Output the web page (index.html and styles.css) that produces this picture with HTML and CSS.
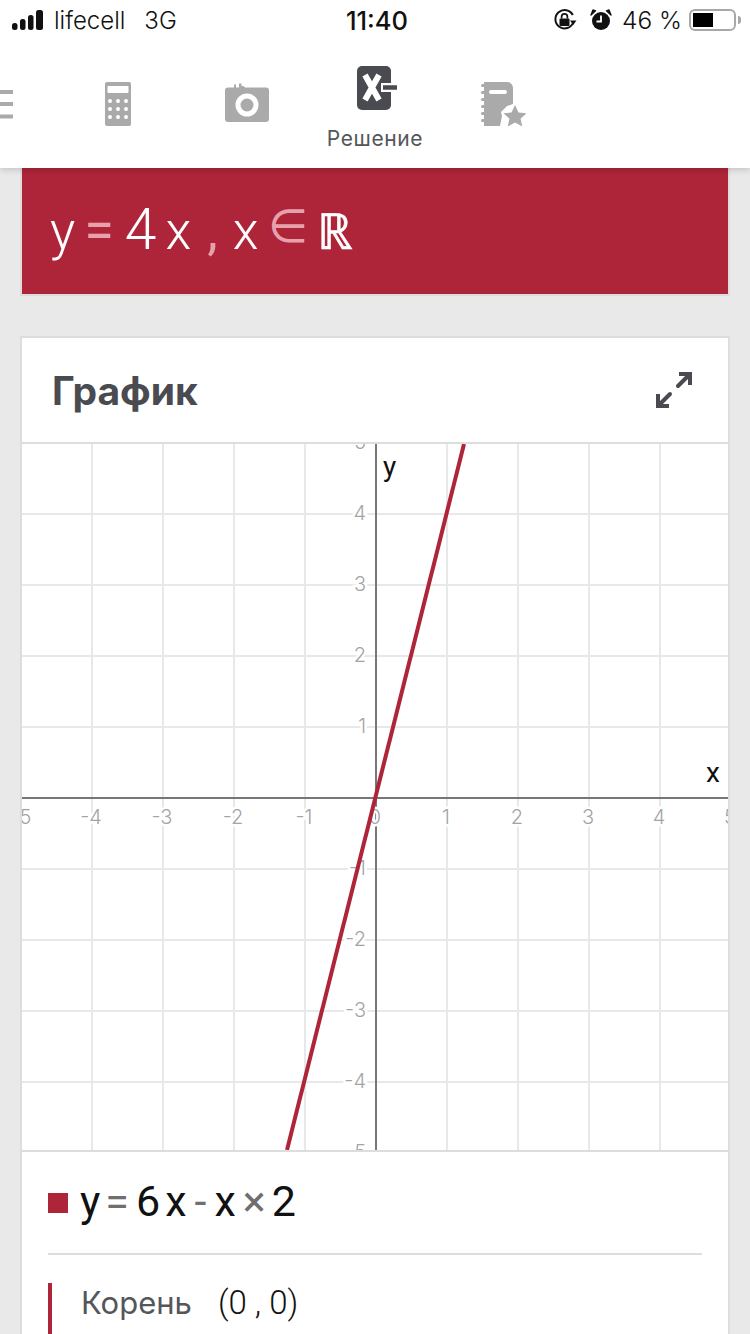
FILE: index.html
```html
<!DOCTYPE html>
<html lang="ru">
<head>
<meta charset="utf-8">
<title>График</title>
<link rel="stylesheet" href="styles.css">
</head>
<body>
<header class="top">
  <div class="status">
    <div class="status-left">
      <svg class="signal" width="33" height="20" viewBox="0 0 33 20"><rect x="0" y="13" width="5.5" height="7" rx="2.5"/><rect x="8" y="9" width="5.5" height="11" rx="2.5"/><rect x="16" y="5" width="5.5" height="15" rx="2.5"/><rect x="24" y="0" width="7" height="20" rx="2.5"/></svg>
      <span class="carrier">lifecell</span>
      <span class="net">3G</span>
    </div>
    <div class="clock">11:40</div>
    <div class="status-right">
      <svg class="lock" width="24" height="24" viewBox="0 0 24 24"><path d="M20.2 14.5A9.2 9.2 0 1 1 19.8 7" fill="none" stroke="#111" stroke-width="2"/><path d="M17 12.5H23.500L20.200 17Z" fill="#111"/><rect x="6.5" y="10.5" width="10" height="7.5" rx="1" fill="#111"/><path d="M8.6 10.5V8.8a2.9 2.9 0 0 1 5.8 0v1.7" fill="none" stroke="#111" stroke-width="1.7"/></svg>
      <svg class="alarm" width="22" height="22" viewBox="0 0 22 22"><circle cx="11" cy="12" r="9" fill="#111"/><path d="M11 6.5V12.5H6.5" fill="none" stroke="#fff" stroke-width="1.8"/><path d="M1 6 5.5 1.8 3 1ZM21 6 16.5 1.8 19 1Z" fill="#111" stroke="#111" stroke-width="1.4" stroke-linejoin="round"/></svg>
      <span class="percent">46 %</span>
      <div class="battery"><div class="battery-fill"></div></div>
      <div class="battery-nub"></div>
    </div>
  </div>
  <nav class="tabs">
    <div class="tab">
      <svg width="44" height="44" viewBox="0 0 44 44"><path d="M31 8h13v4H31zM31 20h13v4H31zM31 32.500h13v4H31z" fill="#aaa"/></svg>
    </div>
    <div class="tab">
      <svg width="44" height="44" viewBox="0 0 44 44"><path fill="#aaa" fill-rule="evenodd" d="M10 0H32a2 2 0 0 1 2 2V42a2 2 0 0 1-2 2H10a2 2 0 0 1-2-2V2a2 2 0 0 1 2-2ZM11.500 4a1 1 0 0 0-1 1V10a1 1 0 0 0 1 1H30.500a1 1 0 0 0 1-1V5a1 1 0 0 0-1-1Z"/><g fill="#fff"><circle cx="13" cy="19" r="2"/><circle cx="21" cy="19" r="2"/><circle cx="29" cy="19" r="2"/><circle cx="13" cy="27" r="2"/><circle cx="21" cy="27" r="2"/><circle cx="29" cy="27" r="2"/><circle cx="13" cy="35" r="2"/><circle cx="21" cy="35" r="2"/><circle cx="29" cy="35" r="2"/></g></svg>
    </div>
    <div class="tab">
      <svg width="44" height="44" viewBox="0 0 44 44"><path fill="#aaa" fill-rule="evenodd" d="M3 5.500H9V2.500h2V5.500h3V1.500h2.500V4h2L20 5.500H41a3 3 0 0 1 3 3V37a3 3 0 0 1-3 3H3a3 3 0 0 1-3-3V8.500a3 3 0 0 1 3-3Z"/><circle cx="22" cy="23" r="9" fill="#aaa" stroke="#fff" stroke-width="5"/></svg>
    </div>
    <div class="tab active">
      <svg width="44" height="44" viewBox="0 0 44 44"><rect x="4" y="0" width="34" height="44" rx="5" fill="#4a4b50"/><path d="M12 9 26 34M26 9 12 34" stroke="#fff" stroke-width="6"/><path d="M28 21.500H38" stroke="#fff" stroke-width="9"/><path d="M30 21.500H44" stroke="#4a4b50" stroke-width="4.500"/></svg>
      <span class="tab-label">Решение</span>
    </div>
    <div class="tab">
      <svg width="46" height="44" viewBox="-1 0 46 44"><path fill="#aaa" fill-rule="evenodd" d="M3 0H26a6 6 0 0 1 6 6V22l-6 2-6 6 1 4-2 10H3V40H1.500a1.500 1.500 0 0 1 0-3H3V33H1.500a1.500 1.500 0 0 1 0-3H3V26H1.500a1.500 1.500 0 0 1 0-3H3V19H1.500a1.500 1.500 0 0 1 0-3H3V12H1.500a1.500 1.500 0 0 1 0-3H3V5H1.500a1.500 1.500 0 0 1 0-3H3ZM10 8a1.500 1.500 0 0 0 0 4H24a1.500 1.500 0 0 0 0-4Z"/><path fill="#aaa" d="M34 23l3.500 7.500 8 .8-6 5.400 1.800 7.800-7.300-4-7.300 4 1.800-7.800-6-5.400 8-.8Z"/></svg>
    </div>
  </nav>
</header>

<section class="banner">
  <div class="math banner-math">
    <span>y</span><span class="op-light eq">=</span><span class="num">4</span><span class="x">x</span><span class="op-light comma">,</span><span class="x2">x</span><span class="op-light in">∈</span><span class="real">ℝ</span>
  </div>
</section>

<section class="card">
  <div class="card-head">
    <h2 class="card-title">График</h2>
    <svg class="expand" width="40" height="40" viewBox="0 0 40 40"><g fill="none" stroke="#4a4b50" stroke-width="4"><path d="M24 16 35 5" stroke-linecap="round"/><path d="M25 4H36V15"/><path d="M16 24 5 35" stroke-linecap="round"/><path d="M4 24V36H15"/></g></svg>
  </div>
  <div class="graph">
    <svg class="plot" width="706" height="706" viewBox="22 444 706 706">
      <g class="grid">
        <path d="M92 444V1150M163 444V1150M234 444V1150M305 444V1150M447 444V1150M518 444V1150M589 444V1150M660 444V1150"/>
        <path d="M22 514H728M22 585H728M22 656H728M22 727H728M22 869H728M22 940H728M22 1011H728M22 1082H728"/>
      </g>
      <g class="axis"><path d="M22 798H728M376 444V1150"/></g>
      <g class="ticks">
        <text x="21" y="824" text-anchor="middle">-5</text>
        <text x="91" y="824" text-anchor="middle">-4</text>
        <text x="162" y="824" text-anchor="middle">-3</text>
        <text x="233" y="824" text-anchor="middle">-2</text>
        <text x="304" y="824" text-anchor="middle">-1</text>
        <text x="375" y="824" text-anchor="middle">0</text>
        <text x="446" y="824" text-anchor="middle">1</text>
        <text x="517" y="824" text-anchor="middle">2</text>
        <text x="588" y="824" text-anchor="middle">3</text>
        <text x="659" y="824" text-anchor="middle">4</text>
        <text x="730" y="824" text-anchor="middle">5</text>
        <text x="366" y="449" text-anchor="end">5</text>
        <text x="366" y="520" text-anchor="end">4</text>
        <text x="366" y="591" text-anchor="end">3</text>
        <text x="366" y="662" text-anchor="end">2</text>
        <text x="366" y="733" text-anchor="end">1</text>
        <text x="366" y="875" text-anchor="end">-1</text>
        <text x="366" y="946" text-anchor="end">-2</text>
        <text x="366" y="1017" text-anchor="end">-3</text>
        <text x="366" y="1088" text-anchor="end">-4</text>
        <text x="366" y="1159" text-anchor="end">-5</text>
      </g>
      <text class="axis-name" x="383" y="476">y</text>
      <text class="axis-name" x="706" y="782">x</text>
      <path class="curve" d="M287 1150 464 444"/>
    </svg>
  </div>
  <div class="legend">
    <div class="legend-eq">
      <span class="swatch"></span>
      <div class="math eq-math">
        <span>y</span><span class="op-grey eq">=</span><span class="num">6</span><span class="x">x</span><span class="op-grey minus">-</span><span class="x3">x</span><span class="op-grey times">×</span><span class="num two">2</span>
      </div>
    </div>
    <div class="root">
      <span class="root-label">Корень</span>
      <span class="root-value">(0 , 0)</span>
    </div>
  </div>
</section>
</body>
</html>
```
FILE: styles.css
```css
* { box-sizing: border-box; }
html, body { margin: 0; padding: 0; }
body {
  width: 750px;
  height: 1334px;
  overflow: hidden;
  background: #e9e9e9;
  font-family: Inter, "Liberation Sans", sans-serif;
  color: #111;
}
.top {
  position: relative;
  z-index: 2;
  height: 168px;
  background: #fff;
  box-shadow: 0 2px 6px rgba(0, 0, 0, .16);
  overflow: hidden;
}
.status {
  height: 40px;
  padding: 0 12px;
  display: grid;
  grid-template-columns: 1fr auto 1fr;
  align-items: center;
  font-size: 24px;
}
.status-left { display: flex; align-items: center; }
.signal { fill: #111; }
.carrier { margin-left: 9px; font-weight: 300; font-size: 24px; }
.net { margin-left: 19px; font-weight: 300; font-size: 24px; }
.clock { margin-left: 4px; font-weight: 500; font-size: 25.5px; }
.status-right { display: flex; align-items: center; justify-content: flex-end; }
.alarm { margin-left: 13px; }
.percent { margin-left: 10px; font-weight: 300; font-size: 24.5px; }
.battery {
  margin-left: 7px;
  width: 47px;
  height: 22px;
  border: 2px solid #a8a8a8;
  border-radius: 6px;
  padding: 2px;
}
.battery-fill { width: 20px; height: 100%; background: #000; }
.battery-nub { width: 3px; height: 8px; margin-left: 2px; margin-right: -3px; background: #a8a8a8; border-radius: 0 3px 3px 0; }

.tabs { display: flex; margin-left: -73px; padding-top: 26px; height: 128px; }
.tab {
  flex: 0 0 128px;
  display: flex;
  flex-direction: column;
  align-items: center;
  padding-top: 16px;
}
.tab.active { padding-top: 0; }
.tab-label {
  margin-top: 16px;
  font-size: 21px;
  line-height: 26px;
  letter-spacing: .6px;
  color: #55565a;
  font-weight: 400;
}

.banner {
  margin: 0 20px;
  height: 128px;
  background: #ae2439;
  border: 2px solid #ddd;
  border-top: 0;
  display: flex;
  align-items: center;
}
.math { font-family: Roboto, "Noto Sans", sans-serif; display: flex; align-items: baseline; }
.banner-math { padding: 0 0 0 28px; margin-top: -3px; font-size: 53px; font-weight: 300; color: #fff; }
.banner-math .num { font-size: 57px; margin-left: 11px; }
.banner-math .eq { margin-left: 9px; font-size: 54px; font-weight: 400; }
.banner-math .x { margin-left: 9px; }
.banner-math .comma { margin-left: 16px; font-weight: 400; }
.banner-math .x2 { margin-left: 15px; }
.banner-math .in { margin-left: 9px; font-family: "DejaVu Sans", sans-serif; font-size: 46px; position: relative; top: -7px; }
.banner-math .real { margin-left: 9px; font-family: "DejaVu Sans", sans-serif; font-size: 50px; -webkit-text-stroke: .6px #fff; }
.op-light { color: #e8a0ac; }
.op-grey { color: #6f6f6f; }

.card {
  margin: 40px 20px 0;
  background: #fff;
  border: 2px solid #ddd;
  border-bottom: 0;
}
.card-head {
  height: 104px;
  display: flex;
  align-items: center;
  justify-content: space-between;
  padding: 0 34px 0 30px;
  border-bottom: 2px solid #ddd;
  box-sizing: content-box;
}
.card-title { margin: 0; font-size: 39px; font-weight: 700; color: #4a4b50; }
.graph { height: 706px; }
.plot { display: block; }
.grid path { stroke: #e8e8e8; stroke-width: 2; fill: none; }
.axis path { stroke: #777; stroke-width: 2; fill: none; }
.ticks text {
  font-family: Inter, sans-serif;
  font-size: 20px;
  font-weight: 300;
  fill: #a4a4a4;
  stroke: #fff;
  stroke-width: 5px;
  paint-order: stroke;
}
.axis-name { font-family: Roboto, sans-serif; font-size: 28px; fill: #111; }
.curve { stroke: #ae2439; stroke-width: 4; fill: none; }

.legend { border-top: 2px solid #ddd; padding: 0 26px; }
.legend-eq {
  height: 103px;
  display: flex;
  align-items: center;
  border-bottom: 2px solid #ddd;
}
.swatch { width: 20px; height: 20px; background: #ae2439; margin-right: 12px; }
.eq-math { font-size: 43px; font-weight: 400; color: #111; margin-top: -3px; }
.eq-math .eq { margin-left: 5px; }
.eq-math .num { margin-left: 7px; }
.eq-math .x { margin-left: 5px; }
.eq-math .minus { margin-left: 8px; }
.eq-math .x3 { margin-left: 8px; }
.eq-math .times { margin-left: 7px; }
.eq-math .two { margin-left: 6px; }
.root {
  margin-top: 28px;
  height: 60px;
  border-left: 4px solid #ae2439;
  padding-left: 29px;
  display: flex;
  align-items: flex-start;
  font-size: 31px;
  line-height: 40px;
}
.root-label { color: #55565a; font-weight: 400; }
.root-value { margin-left: 26px; font-family: Roboto, sans-serif; font-size: 33px; font-weight: 300; color: #111; }
```
